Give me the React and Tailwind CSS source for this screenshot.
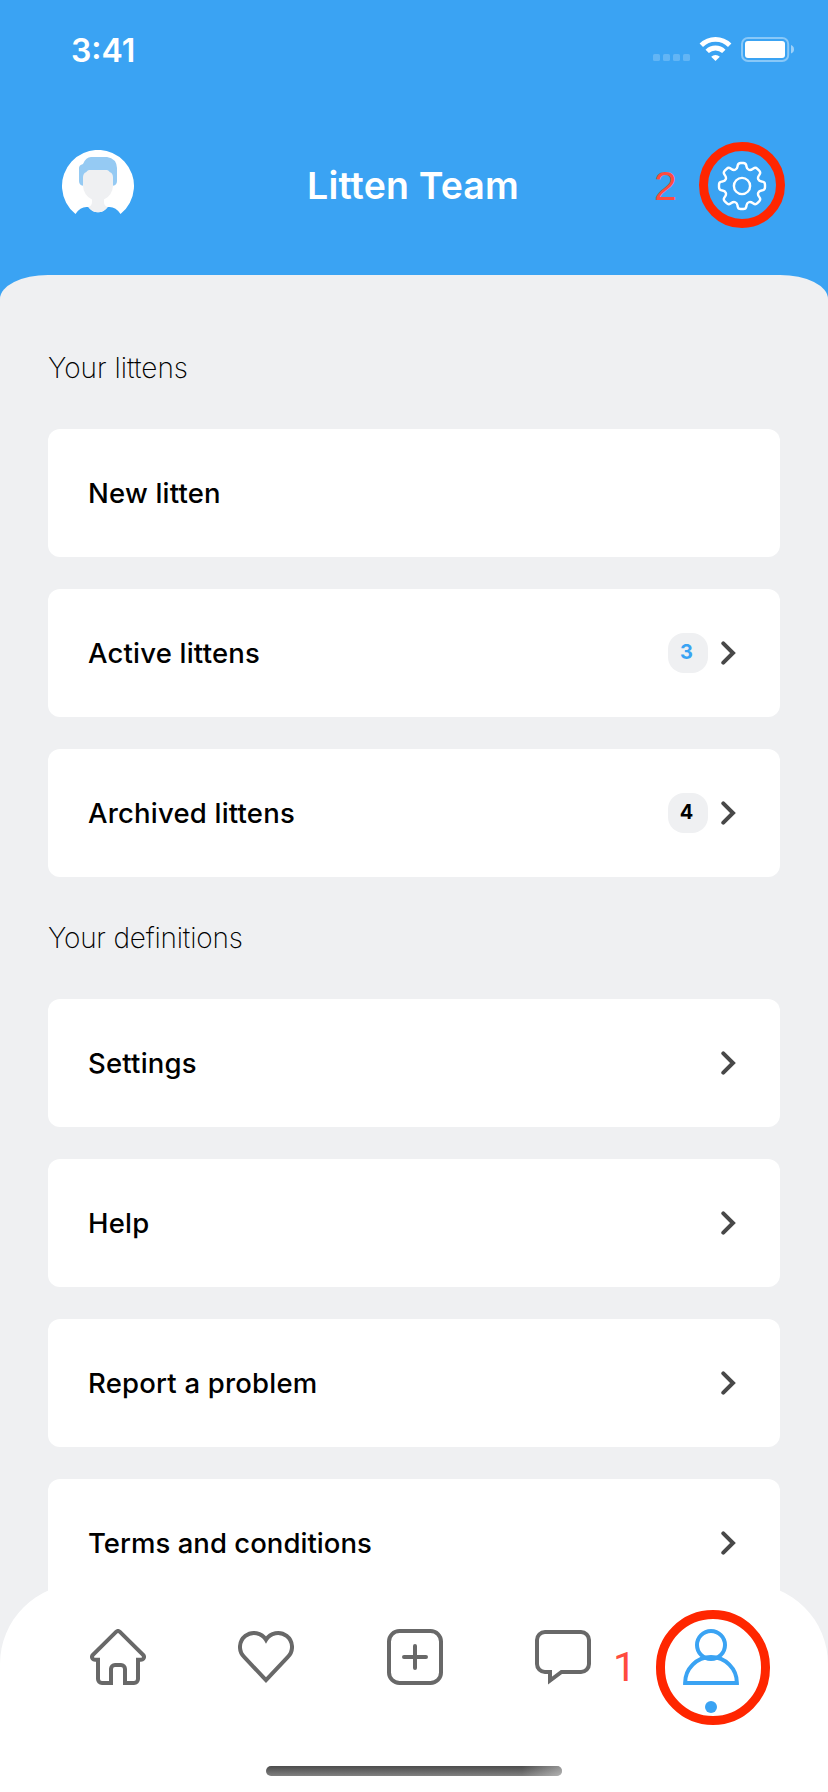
import React from "react";

const TOOTH = [[-4.9, -17], [-3.9, -23], [3.9, -23], [4.9, -17]];

// Eight-tooth cog outline centred on the origin, with every corner rounded.
function cogPath() {
  const pts = [];
  for (let i = 0; i < 8; i++) {
    const a = (i * Math.PI) / 4;
    TOOTH.forEach(([x, y]) =>
      pts.push([x * Math.cos(a) - y * Math.sin(a), x * Math.sin(a) + y * Math.cos(a)])
    );
  }
  const towards = (p, q, d) => {
    const len = Math.hypot(q[0] - p[0], q[1] - p[1]);
    const t = Math.min(d / len, 0.5);
    return [p[0] + (q[0] - p[0]) * t, p[1] + (q[1] - p[1]) * t];
  };
  const f = (p) => p.map((n) => n.toFixed(2)).join(" ");
  return (
    pts
      .map((p, i) => {
        const prev = pts[(i + pts.length - 1) % pts.length];
        const next = pts[(i + 1) % pts.length];
        return `${i ? "L" : "M"}${f(towards(p, prev, 2.6))} Q${f(p)} ${f(towards(p, next, 2.6))}`;
      })
      .join(" ") + "Z"
  );
}

function StatusBar() {
  return (
    <div className="flex h-[98px] items-center justify-between pl-[71px] pr-[34px] text-white">
      <span className="pt-[3px] text-[32px] font-semibold leading-none">3:41</span>
      <svg className="h-[26px] w-[141px]" viewBox="653 36 141 26" fill="#fff">
        <g opacity="0.2">
          <rect x="653" y="54" width="7" height="7" rx="1.6" />
          <rect x="663" y="54" width="7" height="7" rx="1.6" />
          <rect x="673" y="54" width="7" height="7" rx="1.6" />
          <rect x="683" y="54" width="7" height="7" rx="1.6" />
        </g>
        <g fill="none" stroke="#fff" strokeWidth="4.8">
          <path d="M701.3 45.3a20 20 0 0 1 28.4 0" />
          <path d="M707.2 51.4a11.8 11.8 0 0 1 16.6 0" />
        </g>
        <path d="M715.5 61l-4.3-4.3a6.2 6.2 0 0 1 8.6 0z" />
        <rect x="742" y="38" width="46.2" height="23" rx="6" fill="none" stroke="#fff" strokeOpacity="0.4" strokeWidth="2" />
        <rect x="745" y="41" width="40" height="17" rx="3" />
        <path d="M791 45v8.6q3-1.2 3-4.3t-3-4.3z" opacity="0.5" />
      </svg>
    </div>
  );
}

function Avatar() {
  return (
    <svg className="h-[72px] w-[72px]" viewBox="0 0 72 72">
      <path d="M13.5 64A36 36 0 1 1 58.5 64Q54 57 47.5 57H45.7Q42 62.3 36 62.3T26.3 57H24.5Q18 57 13.5 64Z" fill="#fff" />
      <path d="M17 18q0-3 4-4Q24 7 29 7H45Q54.5 8.5 55 18V31q0 4-4 4.8V20H21V35.8Q17 35 17 31Z" fill="#95caf3" />
      <path d="M21 27Q21.5 20.5 27 20H45Q50.5 20.5 51 27V36Q50.5 45 42 49.6V52Q42 56 45.7 57Q42 62.3 36 62.3T26.3 57Q30 56 30 52V49.6Q21.5 45 21 36Z" fill="#eff0f2" />
      <path d="M21 27V20H27Q25.5 20.3 24 22.2Q21.5 23 21 27ZM51 27V20H45Q46.5 20.3 48 22.2Q50.5 23 51 27Z" fill="#95caf3" />
    </svg>
  );
}

function Header() {
  return (
    <div className="flex h-[177px] items-start px-[62px] pt-[52px]">
      <div className="grid h-[72px] w-full grid-cols-[1fr_auto_1fr] items-center">
        <Avatar />
        <h1 className="pr-[2px] text-[37.5px] font-semibold leading-none tracking-[0.15px] text-white">
          Litten Team
        </h1>
        <div className="relative -mr-0.5 h-[52px] w-[52px] justify-self-end">
          <svg className="h-[52px] w-[52px]" viewBox="-26 -26 52 52" fill="none" stroke="#fff" strokeWidth="2.4">
            <path d={cogPath()} />
            <circle r="8.1" />
          </svg>
          <div className="absolute -left-[17px] -top-[18px] h-[86px] w-[86px] rounded-full border-[9px] border-[#ff2600]" />
          <span className="absolute -left-[62px] top-[6px] font-['Liberation_Sans',sans-serif] text-[41px] leading-none text-[#ff4b3e]">
            2
          </span>
        </div>
      </div>
    </div>
  );
}

function Row({ label, labelClass = "tracking-[0.2px]", count, countClass, arrow = true }) {
  return (
    <div className="flex h-32 shrink-0 items-center rounded-xl bg-white pl-10 pr-11">
      <span className={`flex-1 pt-[2px] text-[27.5px] font-medium leading-none text-black ${labelClass}`}>{label}</span>
      {count && (
        <span
          className={`mr-[13px] flex h-10 w-10 items-center justify-center rounded-2xl bg-[#eff0f2] pb-[2px] pr-[3px] text-[20px] font-bold leading-none ${countClass}`}
        >
          {count}
        </span>
      )}
      {arrow && (
        <svg className="h-6 w-[15px]" viewBox="0 0 15 24" fill="none" stroke="#484848" strokeWidth="4" strokeLinecap="round">
          <path d="M2.3 2.3L12 12L2.3 21.7" />
        </svg>
      )}
    </div>
  );
}

function Section({ title, titleClass, children }) {
  return (
    <section className="shrink-0">
      <h2 className={`flex h-[122px] items-center text-[28px] font-extralight leading-none text-black ${titleClass}`}>
        {title}
      </h2>
      <div className="flex flex-col gap-8">{children}</div>
    </section>
  );
}

function NavIcon({ children, color = "#686868" }) {
  return (
    <svg className="h-14 w-14" viewBox="0 0 56 56" fill="none" stroke={color} strokeWidth="4">
      {children}
    </svg>
  );
}

function TabBar() {
  return (
    <nav className="absolute inset-x-0 bottom-0 flex h-[208px] flex-col items-center rounded-t-[80px] bg-white pt-[45px]">
      <div className="flex w-full justify-between pl-[90px] pr-[89px]">
        <NavIcon>
          <path d="M26.3 2.7Q28 1.3 29.7 2.7L53.3 26Q54.7 28 53.3 29.7Q52.5 30.7 51 30.7H48V50a4 4 0 0 1-4 4H35V40a4 4 0 0 0-4-4H25a4 4 0 0 0-4 4V54H12a4 4 0 0 1-4-4V30.7H5Q3.5 30.7 2.7 29.7Q1.3 28 2.7 26Z" />
        </NavIcon>
        <NavIcon>
          <path d="M28 51.2L6.1 27.9A14 14 0 1 1 28 10.8A14 14 0 1 1 49.9 27.9Z" />
        </NavIcon>
        <NavIcon>
          <rect x="2" y="2" width="52" height="52" rx="10.5" />
          <path d="M17 28H39M28 17V39" strokeLinecap="round" />
        </NavIcon>
        <NavIcon>
          <path d="M10 3H46a8 8 0 0 1 8 8V35a8 8 0 0 1-8 8H26.5L15 51.5V43H10a8 8 0 0 1-8-8V11a8 8 0 0 1 8-8Z" />
        </NavIcon>
        <div className="relative h-14 w-14">
          <NavIcon color="#3aa3f3">
            <circle cx="28" cy="16" r="14" />
            <path d="M2.1 54A25.9 25.9 0 0 1 53.9 54Z" />
          </NavIcon>
          <span className="absolute left-[22px] top-[72px] h-3 w-3 rounded-full bg-[#3aa3f3]" />
          <div className="absolute -left-[27.5px] -top-[19px] h-[114.5px] w-[114.5px] rounded-full border-[9px] border-[#ff2600]" />
          <span className="absolute -left-[70px] top-[18px] font-['Roboto',sans-serif] text-[41px] leading-none text-[#ff4b3e]">
            1
          </span>
        </div>
      </div>
      <div className="relative mb-4 mt-auto h-[10px] w-[296px] overflow-hidden rounded-full bg-linear-to-b from-[#4c4c4c] to-[#808080]">
        <div className="absolute inset-y-0 right-0 w-10 bg-linear-to-r from-white/0 to-white/40" />
      </div>
    </nav>
  );
}

export default function App() {
  return (
    <div className="relative flex h-screen w-full flex-col overflow-hidden bg-[#3aa3f3] font-['Inter',sans-serif]">
      <StatusBar />
      <Header />
      <main className="flex min-h-0 flex-1 flex-col overflow-hidden rounded-t-[48px_24px] bg-[#eff0f2] px-12 pt-8">
        <Section title="Your littens" titleClass="tracking-normal">
          <Row label="New litten" arrow={false} />
          <Row label="Active littens" count="3" countClass="text-[#3aa3f3]" />
          <Row label="Archived littens" count="4" countClass="text-black" />
        </Section>
        <Section title="Your definitions" titleClass="tracking-[-0.2px]">
          <Row label="Settings" />
          <Row label="Help" />
          <Row label="Report a problem" />
          <Row label="Terms and conditions" labelClass="tracking-[0.03px]" />
        </Section>
      </main>
      <TabBar />
    </div>
  );
}
